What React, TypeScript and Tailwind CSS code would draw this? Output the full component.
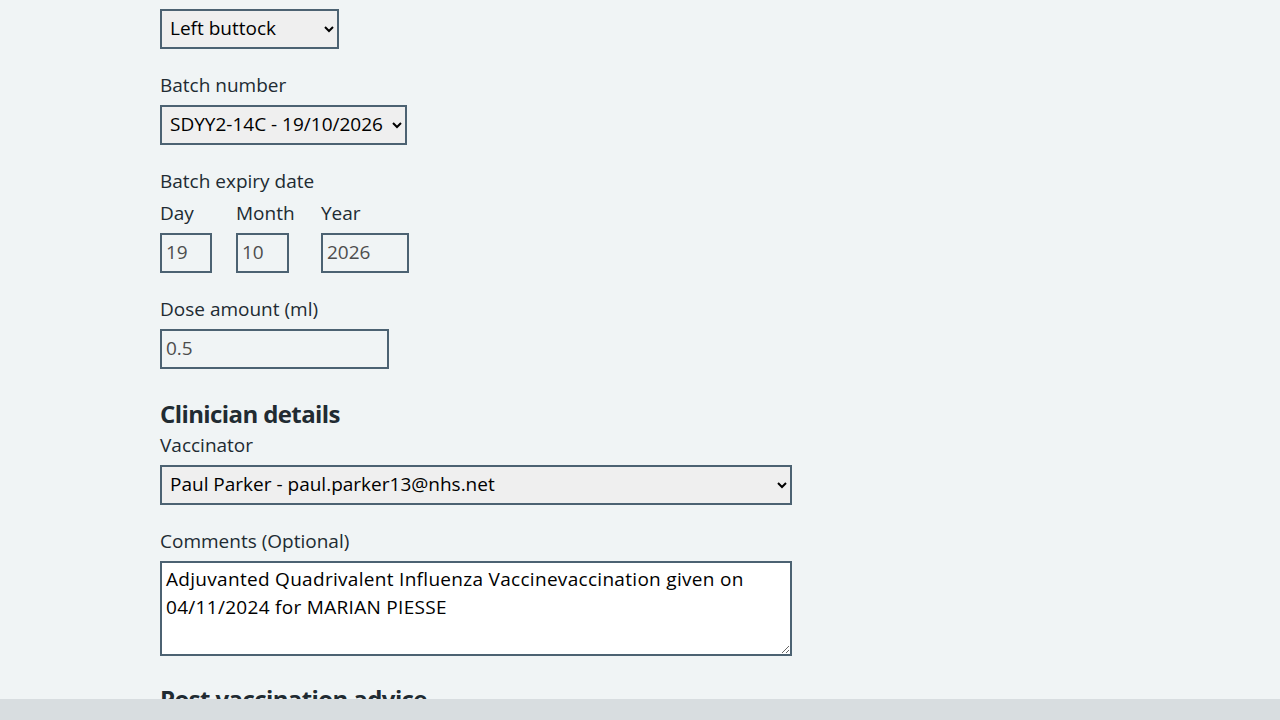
const font = { fontFamily: '"Open Sans", "Liberation Sans", sans-serif' };

function Label({ children }: { children: React.ReactNode }) {
  return <label className="mb-2 block text-[19px] leading-6 text-[#212b32]">{children}</label>;
}

function Select({ value, width }: { value: string; width: string }) {
  return (
    <select
      defaultValue={value}
      className={`h-10 border-2 border-[#4c6272] bg-[#efefef] pb-[3px] pl-1 text-[19px] text-black ${width}`}
    >
      <option>{value}</option>
    </select>
  );
}

function DateField({
  label,
  value,
  width,
  colWidth,
}: {
  label: string;
  value: string;
  width: string;
  colWidth: string;
}) {
  return (
    <div className={`mr-6 flex flex-col ${colWidth}`}>
      <Label>{label}</Label>
      <input
        readOnly
        value={value}
        className={`h-10 border-2 border-[#4c6272] px-1 pb-[2px] text-[19px] text-[#4d4d4d] ${width}`}
      />
    </div>
  );
}

export default function App() {
  return (
    <div className="min-h-screen bg-[#f0f4f5] text-[#212b32]" style={font}>
      <div className="pl-[160px] pt-[9px] pb-10">
        <div className="mb-6">
          <Select value="Left buttock" width="w-[179px]" />
        </div>

        <div className="mb-6">
          <Label>Batch number</Label>
          <Select value="SDYY2-14C - 19/10/2026" width="w-[247px]" />
        </div>

        <div className="mb-6">
          <p className="mb-2 text-[19px] leading-6">Batch expiry date</p>
          <div className="flex">
            <DateField label="Day" value="19" width="w-[52px]" colWidth="w-[52px]" />
            <DateField label="Month" value="10" width="w-[53px]" colWidth="w-[61px]" />
            <DateField label="Year" value="2026" width="w-[88px]" colWidth="w-[88px]" />
          </div>
        </div>

        <div className="mb-8">
          <Label>Dose amount (ml)</Label>
          <input
            readOnly
            value="0.5"
            className="h-10 w-[229px] border-2 border-[#4c6272] px-1 pb-[2px] text-[19px] text-[#4d4d4d]"
          />
        </div>

        <h2 className="mb-[6px] text-[24px] font-bold leading-[26px] tracking-[-0.6px]">
          Clinician details
        </h2>
        <div className="mb-6">
          <Label>Vaccinator</Label>
          <Select value="Paul Parker - paul.parker13@nhs.net" width="w-[632px]" />
        </div>

        <div className="mb-6">
          <Label>Comments (Optional)</Label>
          <textarea
            readOnly
            className="block h-[95px] w-[632px] border-2 border-[#4c6272] bg-white px-1 pt-0.5 text-[19px] leading-7 tracking-[0.3px] text-black"
            defaultValue="Adjuvanted Quadrivalent Influenza Vaccinevaccination given on 04/11/2024 for MARIAN PIESSE"
          />
        </div>

        <h2 className="mt-[30px] text-[24px] font-bold leading-[26px] tracking-[-0.6px]">
          Post vaccination advice
        </h2>
      </div>
      <div className="fixed bottom-0 left-0 right-0 h-[21px] bg-[#d8dde0]" />
    </div>
  );
}
